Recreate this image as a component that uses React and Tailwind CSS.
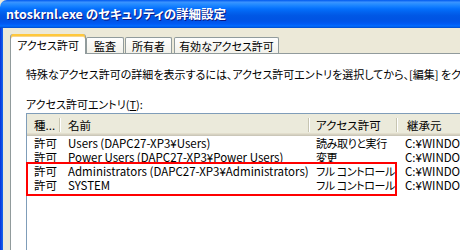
import React from 'react';

const font = "font-['Noto_Sans_CJK_JP','Noto_Sans',sans-serif]";

const Tab = ({ label, active, className }) => (
  <div
    className={
      active
        ? `relative z-10 -mb-px h-[20px] flex items-center justify-center bg-white border-x border-[#919B9C] rounded-t-[3px] shadow-[inset_0_2px_0_#FFC83C,inset_0_3px_0_#F7D68A] ${className}`
        : `h-[16px] flex items-center justify-center border-x border-t border-[#919B9C] rounded-t-[2px] bg-[linear-gradient(to_bottom,#FEFEFE,#F2F1EA)] ${className}`
    }
  >
    <span className={active ? 'mt-[2px] whitespace-nowrap' : 'mt-[1px] whitespace-nowrap'}>{label}</span>
  </div>
);

const Divider = () => (
  <span className="ml-auto flex h-[14px] self-center">
    <span className="w-px bg-[#C7C5B2]" />
    <span className="w-px bg-white" />
  </span>
);

const App = () => {
  const rows = [
    ['許可', 'Users (DAPC27-XP3¥Users)', '読み取りと実行', 'C:¥WINDOWS'],
    ['許可', 'Power Users (DAPC27-XP3¥Power Users)', '変更', 'C:¥WINDOWS'],
    ['許可', 'Administrators (DAPC27-XP3¥Administrators)', 'フル コントロール', 'C:¥WINDOWS'],
    ['許可', 'SYSTEM', 'フル コントロール', 'C:¥WINDOWS'],
  ];

  return (
    <div className={`w-[460px] h-[250px] overflow-hidden flex flex-col bg-[#ECE9D8] text-[11px] leading-[14px] text-black ${font} [font-feature-settings:'palt']`}>
      {/* title bar */}
      <div className="h-[28px] shrink-0 flex items-center pl-[6px] rounded-tl-[7px] bg-[linear-gradient(to_bottom,#0058EE_0%,#3A93FF_8%,#288EFF_14%,#127DFF_24%,#036FFC_32%,#0262EE_44%,#0057E5_56%,#0054E3_68%,#0055EB_78%,#005BF5_86%,#026AFE_92%,#0062EF_96%,#0046C8_100%)]">
        <span className="text-white font-bold text-[12.5px] whitespace-nowrap [text-shadow:1px_1px_#0A1883]">
          ntoskrnl.exe のセキュリティの詳細設定
        </span>
      </div>

      <div className="flex flex-1 min-h-0">
        <div className="w-[3px] shrink-0 bg-[linear-gradient(to_right,#0831D9,#166AEE)]" />
        <div className="flex-1 flex flex-col pl-[7px] pt-[6px] min-w-0">
          {/* tabs */}
          <div className="h-[19px] flex items-end shrink-0">
            <Tab label="アクセス許可" active className="w-[76px]" />
            <Tab label="監査" className="w-[38px]" />
            <Tab label="所有者" className="w-[47px] ml-px" />
            <Tab label="有効なアクセス許可" className="w-[105px] ml-[2px]" />
          </div>

          {/* panel */}
          <div className="flex-1 bg-white border-l border-t border-[#919B9C] pl-[15px] pt-[13px] min-h-0 overflow-hidden">
            <p className="whitespace-nowrap">
              特殊なアクセス許可の詳細を表示するには、アクセス許可エントリを選択してから、[編集] をクリックしてください。
            </p>
            <p className="mt-[16px] whitespace-nowrap">
              アクセス許可エントリ(<span className="underline">T</span>):
            </p>

            {/* list */}
            <div className="relative mt-[2px] w-[600px] h-[200px] border border-[#7F9DB9] bg-white text-[11.5px]">
              <div className="h-[22px] flex bg-[linear-gradient(to_bottom,#EBEADB_0,#EBEADB_19px,#E2DECD_19px,#E2DECD_20px,#D6D2C2_20px,#D6D2C2_21px,#CBC7B8_21px)]">
                <div className="w-[34px] flex items-center pl-[7px]">種...<Divider /></div>
                <div className="w-[249px] flex items-center pl-[7px]">名前<Divider /></div>
                <div className="w-[88px] flex items-center pl-[6px]">アクセス許可<Divider /></div>
                <div className="flex-1 flex items-center pl-[9px]">継承元</div>
              </div>
              {rows.map((r, i) => (
                <div key={i} className="h-[14px] flex items-center whitespace-nowrap">
                  <div className="w-[34px] pl-[7px]">{r[0]}</div>
                  <div className="w-[249px] pl-[7px] overflow-hidden">{r[1]}</div>
                  <div className="w-[88px] pl-[6px] text-[11px] tracking-[-0.4px]">{r[2]}</div>
                  <div className="flex-1 pl-[7px]">{r[3]}</div>
                </div>
              ))}
              <div className="absolute left-[-1px] top-[48px] w-[371px] h-[34px] border-2 border-[#FF0000]" />
            </div>
          </div>
        </div>
      </div>
    </div>
  );
};

export default App;
